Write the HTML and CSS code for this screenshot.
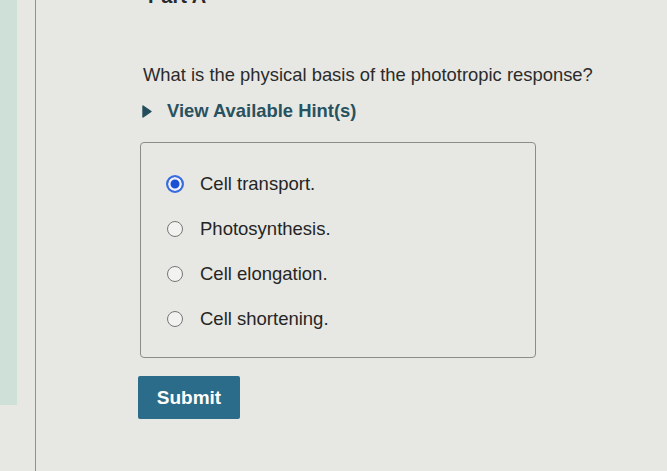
FILE: index.html
```html
<!DOCTYPE html>
<html>
<head>
<meta charset="utf-8">
<link rel="stylesheet" href="styles.css">
</head>
<body>
<div class="page">
  <div class="side"><div class="strip"></div></div>
  <main class="main">
    <h2 class="part">Part A</h2>
    <p class="question">What is the physical basis of the phototropic response?</p>
    <div class="hint">
      <svg class="tri" width="10" height="13" viewBox="0 0 10 13"><path d="M1 1 L9 6.5 L1 12 Z" fill="#234d5c" stroke="#234d5c" stroke-width="1.4" stroke-linejoin="round"/></svg>
      <span>View Available Hint(s)</span>
    </div>
    <div class="choices">
      <label class="choice"><span class="radio on"></span><span>Cell transport.</span></label>
      <label class="choice"><span class="radio"></span><span>Photosynthesis.</span></label>
      <label class="choice"><span class="radio"></span><span>Cell elongation.</span></label>
      <label class="choice"><span class="radio"></span><span>Cell shortening.</span></label>
    </div>
    <button class="submit">Submit</button>
  </main>
</div>
</body>
</html>
```
FILE: styles.css
```css
html, body {
  margin: 0;
  padding: 0;
  height: 100%;
}
body {
  background: #e7e8e3;
  font-family: "Liberation Sans", Arial, sans-serif;
  overflow: hidden;
}
.page {
  display: flex;
  height: 471px;
}
.side {
  width: 35px;
  flex: none;
}
.strip {
  width: 17px;
  height: 405px;
  background: #cfe0d8;
}
.main {
  flex: 1;
  border-left: 1px solid #8f9290;
  padding-left: 107px;
}
.part {
  margin: -14px 0 0 5px;
  font-size: 20px;
  font-weight: bold;
  color: #2a2a2a;
  line-height: 20px;
}
.question {
  margin: 58px 0 0 0;
  font-size: 18.4px;
  line-height: 22px;
  color: #2b2b2b;
}
.hint {
  display: flex;
  align-items: center;
  gap: 15px;
  margin-top: 14px;
  margin-left: -1px;
  font-size: 18.4px;
  font-weight: bold;
  color: #28525f;
  line-height: 22px;
}
.tri {
  display: block;
}
.choices {
  margin-top: 20px;
  margin-left: -3px;
  width: 396px;
  height: 216px;
  border: 1px solid #8c8c8a;
  border-radius: 4px;
  box-sizing: border-box;
  padding: 30px 0 0 26px;
  display: flex;
  flex-direction: column;
  gap: 23px;
}
.choice {
  display: flex;
  align-items: center;
  gap: 17px;
  font-size: 18.5px;
  line-height: 22px;
  color: #252525;
}
.radio {
  width: 16px;
  height: 16px;
  border: 1.5px solid #777777;
  border-radius: 50%;
  box-sizing: border-box;
  background: #f2f2f0;
  flex: none;
}
.radio.on {
  width: 18px;
  height: 18px;
  margin-left: -1px;
  margin-right: -1px;
  border: 2px solid #3a6be0;
  background: #1a4fd6;
  box-shadow: inset 0 0 0 2.5px #eef1f6;
}
.submit {
  display: block;
  margin-top: 18px;
  margin-left: -5px;
  width: 102px;
  height: 43px;
  border: none;
  border-radius: 2px;
  background: #2a6c89;
  color: #ffffff;
  font-family: "Liberation Sans", Arial, sans-serif;
  font-size: 19px;
  font-weight: bold;
  padding: 0;
}
```
